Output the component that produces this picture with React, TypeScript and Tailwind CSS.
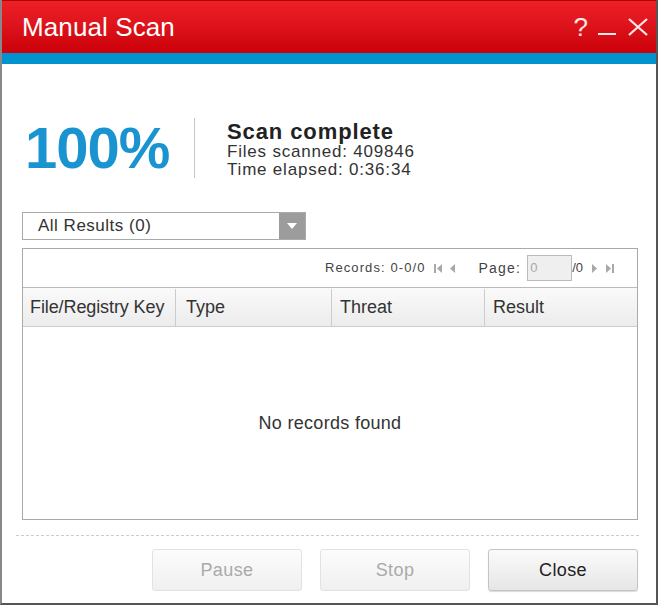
import React from 'react';

const font = { fontFamily: '"Liberation Sans", Arial, sans-serif' };

function PagerIcon({ kind }: { kind: 'first' | 'prev' | 'next' | 'last' }) {
  return (
    <svg width="9" height="9" viewBox="0 0 9 9" className="fill-[#a8a8a8]">
      {kind === 'first' && (<><rect x="0" y="0" width="2" height="9" /><path d="M8 0 L3 4.5 L8 9 Z" /></>)}
      {kind === 'prev' && <path d="M6 0 L1 4.5 L6 9 Z" />}
      {kind === 'next' && <path d="M2 0 L7 4.5 L2 9 Z" />}
      {kind === 'last' && (<><path d="M0 0 L5 4.5 L0 9 Z" /><rect x="6" y="0" width="2" height="9" /></>)}
    </svg>
  );
}

export default function App() {
  return (
    <div className="w-[665px] h-[606px] bg-white" style={font}>
      <div className="w-[658px] h-[605px] border-l-2 border-r-2 border-b-2 border-[#555] border-l-[#888] flex flex-col">
        <div className="h-[53px] bg-gradient-to-b from-[#ee1f27] to-[#cb0008] border-t border-[#a00] flex items-center justify-between pl-[20px] pr-[8px]">
          <span className="text-white text-[26px] tracking-[0.1px] mt-[1px]">Manual Scan</span>
          <div className="flex items-center gap-[12px] text-white/90 text-[26px]">
            <span className="-mr-[2px]">?</span>
            <span className="w-[18px] h-[2px] bg-white/90 mt-[14px]"></span>
            <svg width="20" height="18" viewBox="0 0 20 18" className="stroke-white/90" strokeWidth="2.2"><path d="M1 1 L19 17 M19 1 L1 17" /></svg>
          </div>
        </div>
        <div className="h-[11px] bg-[#0093cf]"></div>

        <div className="flex-1 flex flex-col px-[20px]">
          <div className="flex items-center mt-[54px] h-[60px]">
            <div className="w-[172px] pl-[3px] text-[#1a94d1] text-[58px] font-bold tracking-[-1px] leading-none">100%</div>
            <div className="w-px h-[60px] bg-[#c8c8c8]"></div>
            <div className="pl-[32px] pt-[3px] flex flex-col text-[#333]">
              <span className="text-[22px] font-bold text-[#222] leading-[22px] tracking-[0.9px]">Scan complete</span>
              <span className="text-[17px] leading-[18px] tracking-[0.8px]">Files scanned: 409846</span>
              <span className="text-[17px] leading-[17px] tracking-[0.8px]">Time elapsed: 0:36:34</span>
            </div>
          </div>

          <div className="mt-[34px] w-[284px] h-[28px] border border-[#aaa] flex">
            <div className="flex-1 flex items-center pl-[15px] text-[17px] tracking-[0.5px] text-[#333]">All Results (0)</div>
            <div className="w-[26px] bg-[#9c9c9c] flex items-center justify-center">
              <svg width="10" height="6" viewBox="0 0 10 6" className="fill-white"><path d="M0 0 L10 0 L5 6 Z" /></svg>
            </div>
          </div>

          <div className="mt-[8px] w-[616px] h-[272px] border border-[#aaa] flex flex-col">
            <div className="h-[39px] border-b border-[#bbb] flex items-center justify-end pr-[22px] text-[13px] text-[#444]">
              <span className="tracking-[1.1px]">Records: 0-0/0</span>
              <span className="ml-[8px]"><PagerIcon kind="first" /></span>
              <span className="ml-[6px]"><PagerIcon kind="prev" /></span>
              <span className="ml-[21px] text-[14px] tracking-[1.2px]">Page:</span>
              <div className="ml-[6px] w-[45px] h-[26px] bg-[#efefef] border border-[#bbb] text-[#aaa] pl-[2px] flex items-center">0</div>
              <span>/0</span>
              <span className="ml-[7px]"><PagerIcon kind="next" /></span>
              <span className="ml-[7px]"><PagerIcon kind="last" /></span>
            </div>
            <div className="h-[39px] border-b border-[#ccc] grid grid-cols-[153px_156px_153px_1fr] bg-gradient-to-b from-[#fafafa] to-[#ececec] text-[18px] text-[#333] pt-[1px]">
              <div className="flex items-center pl-[7px] border-r border-[#ccc] tracking-[-0.1px]">File/Registry Key</div>
              <div className="flex items-center pl-[10px] border-r border-[#ccc]">Type</div>
              <div className="flex items-center pl-[8px] border-r border-[#ccc]">Threat</div>
              <div className="flex items-center pl-[8px]">Result</div>
            </div>
            <div className="flex-1 flex items-center justify-center text-[18px] tracking-[0.3px] text-[#333]">No records found</div>
          </div>

          <div className="mt-[15px] -ml-[6px] w-[623px] border-t border-dashed border-[#ccc]"></div>

          <div className="mt-[13px] flex justify-end gap-[18px] w-[616px]">
            <button className="w-[150px] h-[42px] rounded-[3px] border border-[#e2e2e2] bg-gradient-to-b from-[#fcfcfc] to-[#f0f0f0] text-[18px] tracking-[0.4px] text-[#aaa]">Pause</button>
            <button className="w-[150px] h-[42px] rounded-[3px] border border-[#e2e2e2] bg-gradient-to-b from-[#fcfcfc] to-[#f0f0f0] text-[18px] tracking-[0.4px] text-[#aaa]">Stop</button>
            <button className="w-[150px] h-[42px] rounded-[3px] border border-[#c4c4c4] bg-gradient-to-b from-[#fbfbfb] to-[#e6e6e6] text-[18px] tracking-[0.4px] text-[#222] shadow-[0_1px_1px_rgba(0,0,0,0.15)]">Close</button>
          </div>
        </div>
      </div>
    </div>
  );
}
